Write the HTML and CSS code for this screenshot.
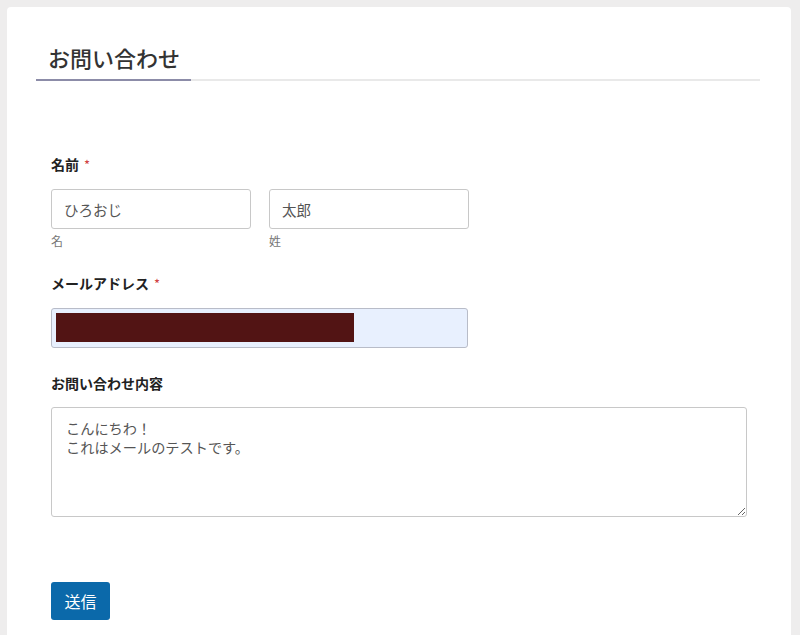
FILE: index.html
```html
<!DOCTYPE html>
<html lang="ja">
<head>
<meta charset="utf-8">
<title>お問い合わせ</title>
<link rel="stylesheet" href="styles.css">
</head>
<body>
<div class="card">
  <div class="title-bar">
    <h2 class="title">お問い合わせ</h2>
  </div>
  <form class="form">
    <div class="field">
      <div class="label">名前<span class="req">*</span></div>
      <div class="name-row">
        <div class="name-col">
          <input class="input" type="text" value="ひろおじ">
          <div class="sub">名</div>
        </div>
        <div class="name-col">
          <input class="input" type="text" value="太郎">
          <div class="sub">姓</div>
        </div>
      </div>
    </div>
    <div class="field field-email">
      <div class="label">メールアドレス<span class="req">*</span></div>
      <div class="input email"><span class="redact"></span></div>
    </div>
    <div class="field">
      <div class="label">お問い合わせ内容</div>
      <textarea class="textarea">こんにちわ！
これはメールのテストです。</textarea>
    </div>
    <button class="btn" type="button">送信</button>
  </form>
</div>
</body>
</html>
```
FILE: styles.css
```css
html, body {
  margin: 0;
  padding: 0;
}
body {
  background: #eeeded;
  font-family: "Noto Sans CJK JP", "Noto Sans", sans-serif;
  color: #333;
  overflow: hidden;
}
.card {
  margin: 7px 9px 0 7px;
  background: #fff;
  border-radius: 4px 4px 0 0;
  padding: 36px 31px 0 29px;
  height: calc(100vh - 7px);
  box-sizing: border-box;
}
.title-bar {
  border-bottom: 2px solid #e9e9e9;
}
.title {
  margin: 0 0 -2px 0;
  width: 155px;
  box-sizing: border-box;
  padding: 0 0 8px 12px;
  font-size: 22px;
  line-height: 28px;
  font-weight: 500;
  color: #333;
  border-bottom: 2px solid #8c8ca8;
}
.form {
  padding: 73px 13px 0 15px;
}
.field {
  margin-bottom: 24px;
}
.field-email {
  margin-bottom: 25px;
}
.label {
  font-size: 14px;
  line-height: 20px;
  font-weight: 700;
  color: #222;
  margin-bottom: 14px;
}
.req {
  color: #d04040;
  font-weight: 400;
  font-size: 13px;
  margin-left: 5px;
}
.name-row {
  display: flex;
  gap: 18px;
}
.name-col {
  width: 200px;
}
.input {
  display: block;
  width: 100%;
  height: 40px;
  box-sizing: border-box;
  border: 1px solid #c8c8c8;
  border-radius: 3px;
  padding: 0 12px;
  font-family: inherit;
  font-size: 14.5px;
  color: #555;
  background: #fff;
  outline: none;
}
.sub {
  margin-top: 4px;
  font-size: 12px;
  line-height: 16px;
  color: #777;
}
.email {
  width: 417px;
  background: #e8f0fe;
  padding: 4px 4px;
  border-color: #b8bcc8;
}
.redact {
  display: block;
  width: 298px;
  height: 29px;
  background: #521414;
}
.textarea {
  display: block;
  width: 100%;
  height: 110px;
  box-sizing: border-box;
  border: 1px solid #c8c8c8;
  border-radius: 3px;
  padding: 11px 14px;
  font-family: inherit;
  font-size: 14.2px;
  line-height: 19px;
  color: #555;
  resize: vertical;
  outline: none;
}
.btn {
  margin-top: 41px;
  width: 59px;
  height: 38px;
  border: none;
  border-radius: 3px;
  background: #0b69aa;
  color: #fff;
  font-family: inherit;
  font-size: 16px;
  padding: 0;
}
```
